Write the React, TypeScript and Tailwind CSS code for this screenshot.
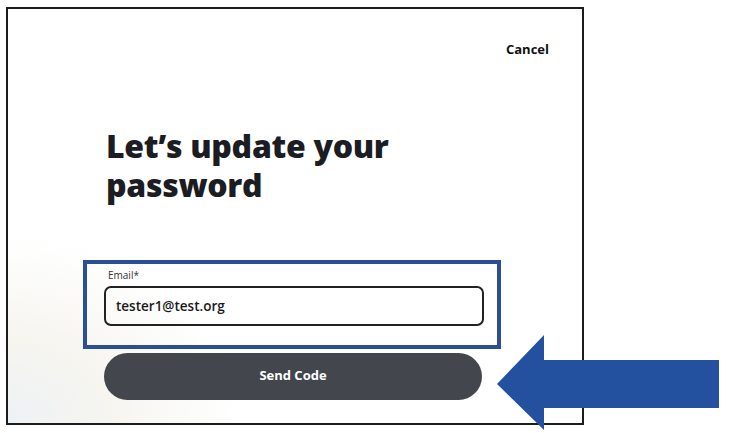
import { useState } from 'react'

const font = { fontFamily: '"Open Sans", "Noto Sans", sans-serif' }

function Arrow() {
  return (
    <svg width="224" height="98" viewBox="0 0 224 98" className="absolute left-[496px] top-[326px]">
      <polygon points="1,51 48,2 48,27 223,27 223,75 48,75 48,97" fill="#2351a0" />
    </svg>
  )
}

export default function App() {
  const [email, setEmail] = useState('tester1@test.org')

  return (
    <div className="relative w-[731px] h-[433px] bg-white" style={font}>
      <div className="ml-[6px] mt-[7px] w-[578px] h-[418px] border-2 border-[#1c1c1c] bg-[radial-gradient(ellipse_40%_45%_at_0%_100%,#eef2f5_0%,#f6f5f0_45%,#ffffff_100%)] flex flex-col">
        <div className="flex justify-end pr-[33px] pt-[31px]">
          <button className="text-[13px] font-bold text-[#111]">Cancel</button>
        </div>
        <h1 className="ml-[98px] mt-[66px] text-[32px] leading-[39px] font-extrabold text-[#1b1d22] tracking-[-0.3px]">
          Let’s update your<br />password
        </h1>
        <div className="ml-[75px] mt-[56px] w-[418px] border-4 border-[#2a4f97] pl-[17px] pr-[13px] pt-[4px] pb-[19px]">
          <label className="block ml-[4px] text-[10px] leading-[14px] text-[#333] mb-[4px]">Email*</label>
          <input
            value={email}
            onChange={e => setEmail(e.target.value)}
            className="w-full h-[40px] rounded-[7px] border-2 border-[#222] px-[10px] text-[13.5px] font-semibold text-[#1a1a1a] outline-none"
            style={font}
          />
        </div>
        <button className="ml-[96px] mt-[4px] w-[378px] h-[47px] rounded-full bg-[#43464c] text-white text-[13px] font-bold">
          Send Code
        </button>
      </div>
      <Arrow />
    </div>
  )
}
